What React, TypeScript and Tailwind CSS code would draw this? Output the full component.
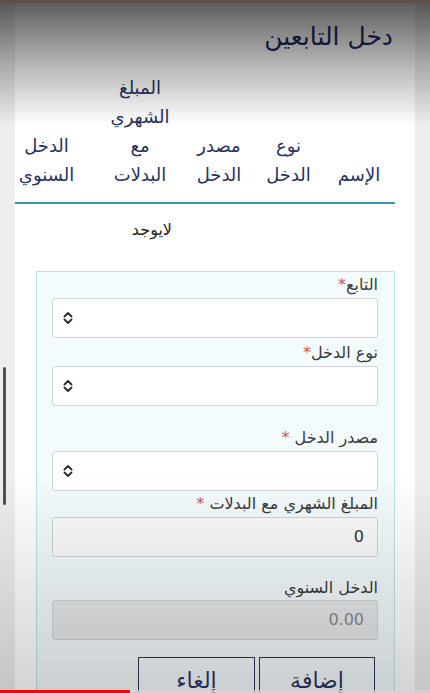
import React from 'react'

const font = {fontFamily: '"DejaVu Sans", "Noto Sans", sans-serif'}

function UpDown() {
  return (
    <svg width="12" height="14" viewBox="0 0 12 14" fill="none">
      <path d="M2.5 5.5 L6 2 L9.5 5.5" stroke="#333" strokeWidth="2" strokeLinecap="round" strokeLinejoin="round" />
      <path d="M2.5 8.5 L6 12 L9.5 8.5" stroke="#333" strokeWidth="2" strokeLinecap="round" strokeLinejoin="round" />
    </svg>
  )
}

function Label({text, req, space}: {text: string; req?: boolean; space?: boolean}) {
  return (
    <div className="h-[20px] text-[16px] leading-[20px] text-[#3a3a3a]">
      {text}
      {req && <span className="text-[#d9534f]">{space ? ' *' : '*'}</span>}
    </div>
  )
}

function SelectBox() {
  return (
    <div className="mt-[3px] flex h-[40px] items-center justify-end rounded-[3px] border border-[#cfd4d6] bg-white pl-[9px]">
      <UpDown />
    </div>
  )
}

export default function App() {
  const headers = [
    {w: 'w-[72px]', lines: ['الإسم']},
    {w: 'w-[69px]', lines: ['نوع', 'الدخل']},
    {w: 'w-[70px]', lines: ['مصدر', 'الدخل']},
    {w: 'w-[92px] pl-[4px]', lines: ['المبلغ', 'الشهري', 'مع', 'البدلات']},
    {w: 'w-[77px] pr-[14px]', lines: ['الدخل', 'السنوي']},
  ]

  return (
    <div dir="rtl" style={font} className="relative min-h-screen bg-[#eeeeee] px-[15px]">
      <div className="min-h-[760px] bg-white">
        <h1 className="pr-[22px] pt-[21px] text-[25px] leading-[32px] text-[#1f2a5c]">دخل التابعين</h1>

        <div className="mr-[20px] mt-[20px] w-[380px] border-b-2 border-[#2e9bb2] pb-[13px]">
          <div className="flex items-end">
            {headers.map((h, i) => (
              <div key={i} className={`${h.w} shrink-0 text-center text-[18px] leading-[29px] text-[#27325f]`}>
                {h.lines.map((l, j) => (
                  <div key={j}>{l}</div>
                ))}
              </div>
            ))}
          </div>
        </div>

        <div className="pr-[243px] pt-[16px] text-[16px] leading-[20px] text-[#222]">لايوجد</div>

        <div className="mr-[20px] mt-[31px] w-[359px] border border-[#bfe2e9] bg-[#f4fbfd] pb-[30px] pl-[15px] pr-[16px] pt-[3px]">
          <Label text="التابع" req />
          <SelectBox />
          <div className="mt-[5px]">
            <Label text="نوع الدخل" req />
          </div>
          <SelectBox />
          <div className="mt-[22px]">
            <Label text="مصدر الدخل" req space />
          </div>
          <div className="mt-[1px]">
            <SelectBox />
          </div>
          <div className="mt-[3px]">
            <Label text="المبلغ الشهري مع البدلات" req space />
          </div>
          <div className="mt-[3px] flex h-[40px] items-center rounded-[3px] border border-[#cfd4d6] bg-[#fbfbfb] pr-[13px] text-[16px] text-[#333]">
            0
          </div>
          <div className="mt-[21px]">
            <Label text="الدخل السنوي" />
          </div>
          <div className="mt-[2px] flex h-[40px] items-center rounded-[3px] border border-[#cfd4d6] bg-[#e6e8ea] pr-[13px] text-[16px] text-[#8a8a8a]">
            0.00
          </div>
          <div className="mt-[17px] flex gap-[4px] pr-[3px]">
            <button className="h-[50px] w-[116px] border border-[#2d3561] pb-[2px] text-[22px] leading-[26px] text-[#2d3561]">إضافة</button>
            <button className="h-[50px] w-[117px] border border-[#2d3561] pb-[2px] text-[22px] leading-[26px] text-[#2d3561]">إلغاء</button>
          </div>
        </div>
      </div>

      <div className="pointer-events-none fixed inset-x-0 top-0 h-[125px] bg-linear-to-b from-black/65 via-black/30 to-transparent" />
      <div className="pointer-events-none fixed inset-x-0 top-0 h-[3px] bg-[#5e5048]" />
      <div className="pointer-events-none fixed inset-x-0 bottom-0 h-[220px] bg-linear-to-t from-black/17 to-transparent" />
      <div className="pointer-events-none fixed left-[3px] top-[367px] h-[138px] w-[3px] rounded-full bg-[#505050]" />
      <div dir="ltr" className="pointer-events-none fixed inset-x-0 bottom-0 flex h-[3px]">
        <div className="w-[130px] bg-[#ff0000]" />
        <div className="flex-1 bg-[#d6d6d6]/70" />
      </div>
    </div>
  )
}
